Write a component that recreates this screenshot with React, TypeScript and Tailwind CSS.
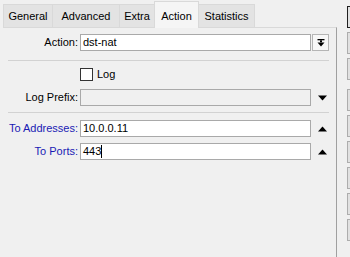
import React from "react";

const DownBar = () => (
  <svg width="8" height="8" viewBox="0 0 8 8">
    <rect x="0.5" y="0" width="7" height="1.3" fill="#000" />
    <rect x="3" y="1.3" width="2" height="2" fill="#000" />
    <polygon points="0.5,3.5 7.5,3.5 4,7.5" fill="#000" />
  </svg>
);

const TriDown = () => (
  <svg width="9" height="6" viewBox="0 0 9 6">
    <polygon points="0,0.5 9,0.5 4.5,5.5" fill="#000" />
  </svg>
);

const TriUp = () => (
  <svg width="9" height="6" viewBox="0 0 9 6">
    <polygon points="0,5.5 9,5.5 4.5,0.5" fill="#000" />
  </svg>
);

export default function App() {
  const tabs = [
    { name: "General", w: "w-[49px]" },
    { name: "Advanced", w: "w-[67px]" },
    { name: "Extra", w: "w-[35px]" },
  ];
  return (
    <div
      className="flex w-[350px] h-[257px] overflow-hidden bg-[#f0f0f0] text-[11px] text-black"
      style={{ fontFamily: '"Liberation Sans", Arial, sans-serif' }}
    >
      <div className="flex flex-col w-[337px] shrink-0">
        {/* tabs */}
        <div className="flex items-end h-[27px] pl-[3px]">
          {tabs.map((t) => (
            <div
              key={t.name}
              className={`${t.w} h-[23px] flex items-center justify-center bg-[#e3e3e3] border-t border-l border-[#d9d9d9]`}
            >
              {t.name}
            </div>
          ))}
          <div className="w-[45px] h-[27px] -mb-px relative z-10 flex items-center justify-center bg-[#f5f5f5] border-t border-l border-r border-[#d9d9d9] pt-[2px]">
            Action
          </div>
          <div className="w-[56px] h-[23px] flex items-center justify-center bg-[#e3e3e3] border-t border-r border-[#d9d9d9]">
            Statistics
          </div>
        </div>
        {/* panel */}
        <div className="ml-[3px] w-[334px] flex-1 border-t border-t-[#d9d9d9] border-r border-r-[#a0a0a0] pt-[6px] flex flex-col">
          {/* Action */}
          <div className="flex items-center h-[17px]">
            <div className="w-[75px] text-right">Action:</div>
            <div className="ml-[2px] w-[231px] h-[17px] bg-white border border-[#a9a9a9] pl-[2px] flex items-center">
              dst-nat
            </div>
            <div className="ml-[1px] w-[17px] h-[17px] bg-[#f7f7f7] border border-[#b5b5b5] flex items-center justify-center">
              <DownBar />
            </div>
          </div>
          <div className="mt-[9px] ml-[5px] w-[321px] h-px bg-[#d2d2d2]" />
          {/* Log checkbox */}
          <div className="mt-[7px] flex items-center h-[13px] pl-[77px]">
            <div className="w-[13px] h-[13px] bg-white border border-[#333333]" />
            <div className="ml-[4px]">Log</div>
          </div>
          {/* Log Prefix */}
          <div className="mt-[8px] flex items-center h-[17px]">
            <div className="w-[75px] text-right">Log Prefix:</div>
            <div className="ml-[2px] w-[231px] h-[17px] bg-[#f0f0f0] border border-[#a9a9a9]" />
            <div className="ml-[7px] flex items-center">
              <TriDown />
            </div>
          </div>
          <div className="mt-[6px] ml-[5px] w-[321px] h-px bg-[#d2d2d2]" />
          {/* To Addresses */}
          <div className="mt-[7px] flex items-center h-[17px]">
            <div className="w-[75px] text-right text-[#1a1ab4]">To Addresses:</div>
            <div className="ml-[2px] w-[231px] h-[17px] bg-white border border-[#a9a9a9] pl-[2px] flex items-center">
              10.0.0.11
            </div>
            <div className="ml-[7px] flex items-center">
              <TriUp />
            </div>
          </div>
          {/* To Ports */}
          <div className="mt-[6px] flex items-center h-[17px]">
            <div className="w-[75px] text-right text-[#1a1ab4]">To Ports:</div>
            <div className="ml-[2px] w-[231px] h-[17px] bg-white border border-[#a9a9a9] pl-[2px] flex items-center">
              443
              <span className="inline-block w-px h-[13px] bg-black" />
            </div>
            <div className="ml-[7px] flex items-center">
              <TriUp />
            </div>
          </div>
        </div>
      </div>
      {/* right buttons */}
      <div className="ml-[10px] pt-[6px] flex flex-col gap-[4px]">
        <div className="w-[20px] h-[22px] bg-[#e1e1e1] border border-[#1f1f1f]" />
        <div className="w-[20px] h-[22px] bg-[#e1e1e1] border border-[#adadad]" />
        <div className="w-[20px] h-[22px] bg-[#e1e1e1] border border-[#adadad]" />
        <div className="mt-[5px] w-[20px] h-[22px] bg-[#e1e1e1] border border-[#adadad]" />
        <div className="w-[20px] h-[22px] bg-[#e1e1e1] border border-[#adadad]" />
        <div className="w-[20px] h-[22px] bg-[#e1e1e1] border border-[#adadad]" />
        <div className="w-[20px] h-[22px] bg-[#e1e1e1] border border-[#adadad]" />
        <div className="w-[20px] h-[22px] bg-[#e1e1e1] border border-[#adadad]" />
        <div className="w-[20px] h-[22px] bg-[#e1e1e1] border border-[#adadad]" />
      </div>
    </div>
  );
}
